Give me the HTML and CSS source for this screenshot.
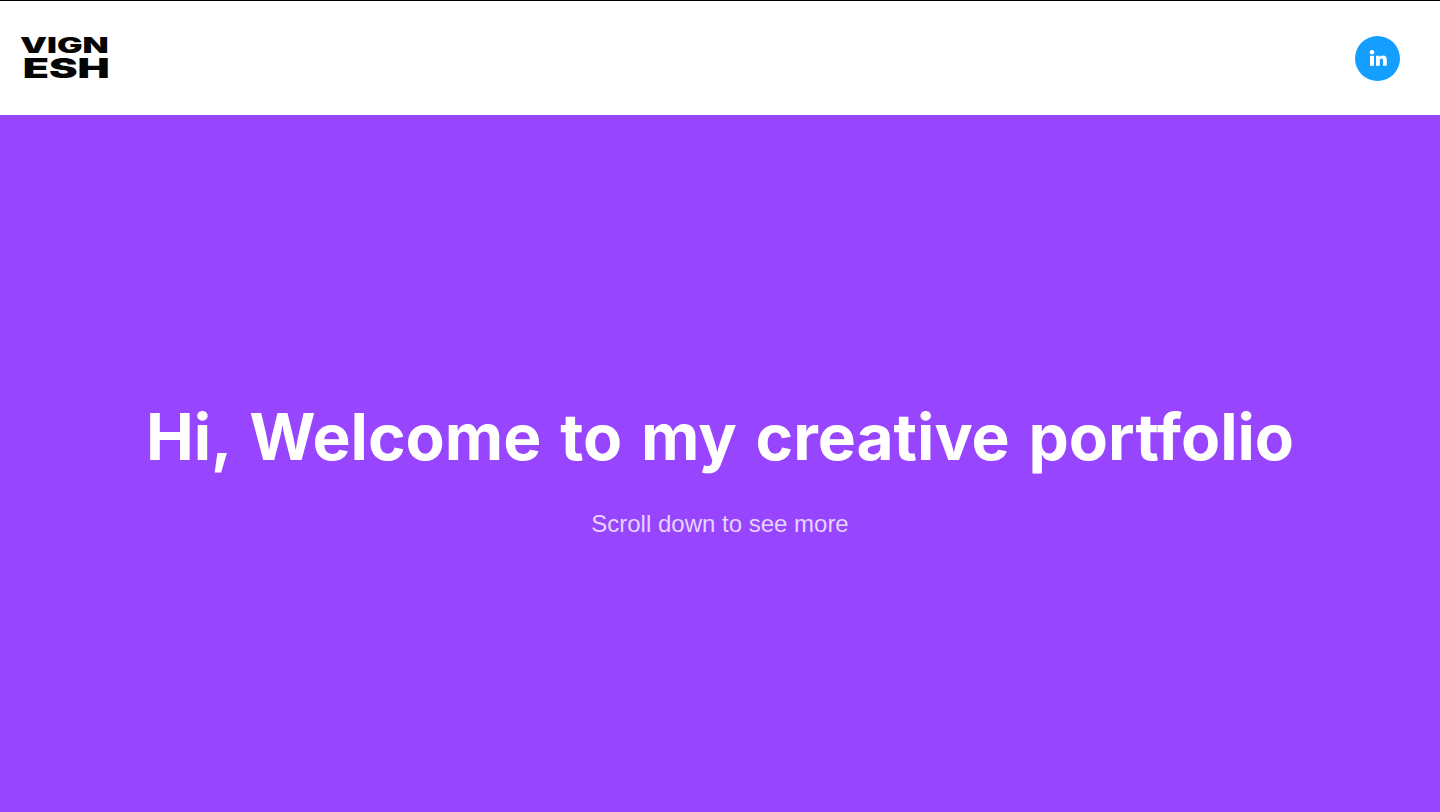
FILE: index.html
```html
<!DOCTYPE html>
<html lang="en">
<head>
    <meta charset="UTF-8">
    <meta name="viewport" content="width=device-width, initial-scale=1.0">
    <title>Vignesh - Portfolio</title>
    <link rel="stylesheet" href="styles.css">
</head>
<body>
    <header class="topbar">
        <a class="logo" href="#">
            <span class="logo-line logo-top">VIGN</span>
            <span class="logo-line logo-bottom">ESH</span>
        </a>
        <a class="social" href="#" aria-label="LinkedIn">
            <svg viewBox="0 0 45 45" width="45" height="45">
                <circle cx="22.5" cy="22.5" r="22.5" fill="#149eff"/>
                <circle cx="17" cy="16.2" r="2.3" fill="#fff"/>
                <rect x="15" y="19.8" width="4" height="10" fill="#fff"/>
                <path d="M21 19.8h3.6v1.5c.7-1.1 1.9-1.8 3.4-1.8 2.7 0 3.8 1.8 3.8 4.4v5.9h-3.8v-5.2c0-1.3-.4-2-1.4-2-1.1 0-1.8.8-1.8 2.1v5.1h-3.8z" fill="#fff"/>
            </svg>
        </a>
    </header>

    <section class="hero">
        <h1>Hi, Welcome to my creative portfolio</h1>
        <p>Scroll down to see more</p>
    </section>
</body>
</html>
```

FILE: styles.css
```css
* {
    box-sizing: border-box;
}
html, body {
    margin: 0;
    height: 100%;
}
body {
    font-family: "Liberation Sans", Arial, sans-serif;
    background-color: #fff;
    display: flex;
    flex-direction: column;
    overflow: hidden;
}
.topbar {
    height: 115px;
    flex: none;
    border-top: 1px solid #000;
    padding: 0 40px 0 21px;
    display: flex;
    align-items: center;
    justify-content: space-between;
    background: #fff;
}
.logo {
    display: flex;
    flex-direction: column;
    align-items: flex-end;
    width: 88px;
    padding-top: 2px;
    color: #050505;
    text-decoration: none;
}
.logo-line {
    font-family: "Inter", "Liberation Sans", sans-serif;
    font-weight: 900;
    transform-origin: right center;
}
.logo-top {
    font-size: 21px;
    line-height: 20px;
    transform: scaleX(1.62);
}
.logo-bottom {
    font-size: 27px;
    line-height: 26px;
    margin-right: -1px;
    transform: scaleX(1.59);
}
.social {
    display: block;
    width: 45px;
    height: 45px;
}
.social svg {
    display: block;
}
.hero {
    flex: 1;
    background-color: #9845ff;
    color: #fff;
    display: flex;
    flex-direction: column;
    align-items: center;
    padding-top: 280px;
}
.hero h1 {
    margin: 0;
    font-family: "Inter", "Liberation Sans", sans-serif;
    font-size: 64px;
    font-weight: 700;
    line-height: 84px;
    word-spacing: 3.6px;
    white-space: nowrap;
}
.hero p {
    margin: 30px 0 0;
    font-size: 24px;
    line-height: 30px;
    color: #e6d4ff;
}
```
